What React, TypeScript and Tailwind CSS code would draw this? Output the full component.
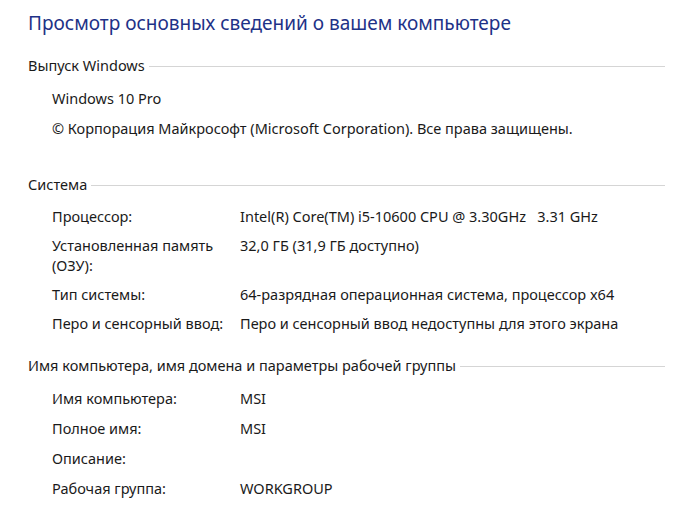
import React from 'react';

const font = { fontFamily: '"Segoe UI", "Noto Sans", sans-serif' };

type Row = { label: React.ReactNode; value?: string };

const SectionHeader: React.FC<{ title: string; className?: string }> = ({ title, className }) => (
  <div className={`flex items-center gap-[4px] h-[20px] ${className ?? ''}`}>
    <span className="text-[14.5px] leading-[20px] text-[#1a1a1a] whitespace-nowrap">{title}</span>
    <div className="flex-1 border-t border-[#d5d5d5] mt-[3px]" />
  </div>
);

const InfoRows: React.FC<{ rows: Row[]; rowClass: string; className?: string }> = ({ rows, rowClass, className }) => (
  <div className={`flex flex-col pl-[24px] ${className ?? ''}`}>
    {rows.map((r, i) => (
      <div key={i} className={`flex text-[14.5px] leading-[20px] text-[#1a1a1a] ${rowClass}`}>
        <div className="w-[188px] shrink-0">{r.label}</div>
        <div className="whitespace-pre">{r.value}</div>
      </div>
    ))}
  </div>
);

const App: React.FC = () => {
  const system: Row[] = [
    { label: 'Процессор:', value: 'Intel(R) Core(TM) i5-10600 CPU @ 3.30GHz   3.31 GHz' },
    { label: <>Установленная память<br />(ОЗУ):</>, value: '32,0 ГБ (31,9 ГБ доступно)' },
    { label: 'Тип системы:', value: '64-разрядная операционная система, процессор x64' },
    { label: 'Перо и сенсорный ввод:', value: 'Перо и сенсорный ввод недоступны для этого экрана' },
  ];
  const computer: Row[] = [
    { label: 'Имя компьютера:', value: 'MSI' },
    { label: 'Полное имя:', value: 'MSI' },
    { label: 'Описание:', value: '' },
    { label: 'Рабочая группа:', value: 'WORKGROUP' },
  ];

  return (
    <div className="w-[697px] h-[532px] bg-white overflow-hidden" style={font}>
      <div className="flex flex-col pt-[9px] pl-[28px] pr-[32px]">
        <h1 className="text-[19px] leading-[28px] text-[#1e3287] whitespace-nowrap">
          Просмотр основных сведений о вашем компьютере
        </h1>

        <SectionHeader title="Выпуск Windows" className="mt-[18px]" />
        <div className="flex flex-col pl-[24px] mt-[8px] text-[14.5px] leading-[20px] text-[#1a1a1a]">
          <div className="py-[5px]">Windows 10 Pro</div>
          <div className="py-[5px] whitespace-nowrap">© Корпорация Майкрософт (Microsoft Corporation). Все права защищены.</div>
        </div>

        <SectionHeader title="Система" className="mt-[31px]" />
        <InfoRows rows={system} rowClass="py-[4.5px]" className="mt-[7px]" />

        <SectionHeader title="Имя компьютера, имя домена и параметры рабочей группы" className="mt-[18px]" />
        <InfoRows rows={computer} rowClass="py-[5px]" className="mt-[8px]" />
      </div>
    </div>
  );
};

export default App;
